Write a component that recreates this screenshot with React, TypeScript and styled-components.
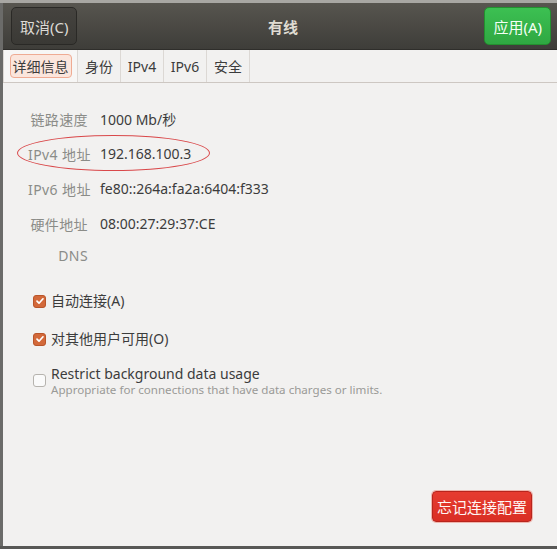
import styled, { createGlobalStyle } from 'styled-components';

const GlobalStyle = createGlobalStyle`
  html, body {
    margin: 0;
    padding: 0;
    background: #6e6e6c;
  }
  body {
    font-family: "Noto Sans", "Noto Sans CJK SC", sans-serif;
  }
`;

const fields = [
  { label: '链路速度', value: '1000 Mb/秒' },
  { label: 'IPv4 地址', value: '192.168.100.3', marked: true },
  { label: 'IPv6 地址', value: 'fe80::264a:fa2a:6404:f333' },
  { label: '硬件地址', value: '08:00:27:29:37:CE' },
  { label: 'DNS', value: '', short: true },
];

const tabs = ['详细信息', '身份', 'IPv4', 'IPv6', '安全'];

const CheckIcon = () => (
  <svg width="10" height="10" viewBox="0 0 10 10" fill="none">
    <path d="M2 5.2l2 2 4-4.4" stroke="#fff" strokeWidth="1.7" strokeLinecap="round" strokeLinejoin="round" />
  </svg>
);

export default function App() {
  return (
    <>
      <GlobalStyle />
      <Screen>
        <TopStrip />
        <Body>
          <SideStrip />
          <Window>
            <HeaderBar>
              <HeaderButton>取消(C)</HeaderButton>
              <Title>有线</Title>
              <HeaderButton $primary>应用(A)</HeaderButton>
            </HeaderBar>
            <TabBar>
              {tabs.map((t, i) => (
                <Tab key={t} $active={i === 0}>
                  <TabLabel $focused={i === 0}>{t}</TabLabel>
                </Tab>
              ))}
            </TabBar>
            <Content>
              <Fields>
                {fields.map((f) => (
                  <FieldRow key={f.label} $short={f.short}>
                    <Label>{f.label}</Label>
                    <Value>{f.value}</Value>
                    {f.marked && <Ellipse />}
                  </FieldRow>
                ))}
              </Fields>
              <Checks>
                <CheckRow>
                  <Box $checked><CheckIcon /></Box>
                  <CheckText>自动连接(A)</CheckText>
                </CheckRow>
                <CheckRow>
                  <Box $checked><CheckIcon /></Box>
                  <CheckText>对其他用户可用(O)</CheckText>
                </CheckRow>
                <CheckRow $top>
                  <Box />
                  <div>
                    <CheckText>Restrict background data usage</CheckText>
                    <Hint>Appropriate for connections that have data charges or limits.</Hint>
                  </div>
                </CheckRow>
              </Checks>
              <Footer>
                <DangerButton>忘记连接配置</DangerButton>
              </Footer>
            </Content>
          </Window>
        </Body>
        <BottomStrip />
      </Screen>
    </>
  );
}

const Screen = styled.div`
  width: 557px;
  height: 549px;
  display: flex;
  flex-direction: column;
  overflow: hidden;
`;

const TopStrip = styled.div`
  height: 3px;
  background: #a8a7a3;
`;

const Body = styled.div`
  flex: 1;
  display: flex;
`;

const SideStrip = styled.div`
  width: 3px;
  background: #6b6b69;
`;

const BottomStrip = styled.div`
  height: 3px;
  background: #585856;
`;

const Window = styled.div`
  flex: 1;
  display: flex;
  flex-direction: column;
  background: #f2f1f0;
`;

const HeaderBar = styled.header`
  height: 47px;
  box-sizing: border-box;
  display: flex;
  align-items: center;
  justify-content: space-between;
  padding: 0 6px 0 8px;
  background: linear-gradient(#57554f, #3e3d39);
  border-bottom: 1px solid #2f2e2b;
`;

const HeaderButton = styled.div<{ $primary?: boolean }>`
  height: 38px;
  box-sizing: border-box;
  display: flex;
  align-items: center;
  padding: 0 8px;
  border-radius: 5px;
  font-size: 15px;
  color: ${({ $primary }) => ($primary ? '#f4fff4' : '#dcdad5')};
  background: ${({ $primary }) =>
    $primary ? 'linear-gradient(#3cc052, #2fa842)' : 'linear-gradient(#45433f, #3a3935)'};
  border: 1px solid ${({ $primary }) => ($primary ? '#23902f' : '#2a2926')};
`;

const Title = styled.div`
  font-size: 15px;
  font-weight: bold;
  color: #dfdbd2;
  margin-left: 4px;
`;

const TabBar = styled.nav`
  height: 33px;
  box-sizing: border-box;
  display: flex;
  align-items: stretch;
  border-bottom: 1px solid #cdc7c2;
  background: #f2f1f0;
`;

const Tab = styled.div<{ $active?: boolean }>`
  display: flex;
  align-items: center;
  justify-content: center;
  flex-shrink: 0;
  box-sizing: border-box;
  width: ${({ $active }) => ($active ? '75px' : '43px')};
  padding: 0;
  background: ${({ $active }) => ($active ? '#f7f6f5' : 'transparent')};
  border-right: 1px solid #dcd8d4;
  border-left: ${({ $active }) => ($active ? '1px solid #dcd8d4' : 'none')};
`;

const TabLabel = styled.span<{ $focused?: boolean }>`
  font-size: 14px;
  color: #3c3c3c;
  white-space: nowrap;
  padding: 1px 2px;
  border-radius: 4px;
  border: 1px solid ${({ $focused }) => ($focused ? '#efab93' : 'transparent')};
  background: ${({ $focused }) => ($focused ? '#fbe6dd' : 'transparent')};
`;

const Content = styled.main`
  flex: 1;
  display: flex;
  flex-direction: column;
  padding: 18px 0 24px 25px;
`;

const Fields = styled.div`
  display: flex;
  flex-direction: column;
`;

const FieldRow = styled.div<{ $short?: boolean }>`
  position: relative;
  height: ${({ $short }) => ($short ? '29px' : '35px')};
  display: flex;
  align-items: center;
  gap: 12px;
  margin-bottom: ${({ $short }) => ($short ? '6px' : '0')};
`;

const Label = styled.span`
  width: 60px;
  white-space: nowrap;
  text-align: right;
  font-size: 14px;
  letter-spacing: 0.4px;
  color: #8b8c88;
`;

const Value = styled.span`
  font-size: 14px;
  white-space: nowrap;
  color: #3c3c3c;
`;

const Ellipse = styled.div`
  position: absolute;
  left: -11px;
  top: -1px;
  width: 193px;
  height: 36px;
  border: 1px solid #d9484a;
  border-radius: 50%;
  box-sizing: border-box;
  pointer-events: none;
`;

const Checks = styled.div`
  display: flex;
  flex-direction: column;
  gap: 20px;
  margin-top: 16px;
  padding-left: 5px;
`;

const CheckRow = styled.div<{ $top?: boolean }>`
  display: flex;
  align-items: ${({ $top }) => ($top ? 'flex-start' : 'center')};
  gap: 5px;
  margin-top: ${({ $top }) => ($top ? '-3px' : '0')};
`;

const Box = styled.span<{ $checked?: boolean }>`
  width: 13px;
  height: 13px;
  flex-shrink: 0;
  box-sizing: border-box;
  border-radius: 3px;
  display: flex;
  align-items: center;
  justify-content: center;
  margin-top: ${({ $checked }) => ($checked ? '0' : '9px')};
  background: ${({ $checked }) => ($checked ? '#d3693a' : '#fafafa')};
  border: 1px solid ${({ $checked }) => ($checked ? '#b9552a' : '#b6b3ae')};
`;

const CheckText = styled.div`
  font-size: 14px;
  color: #3c3c3c;
  line-height: 18px;
  white-space: nowrap;
`;

const Hint = styled.div`
  font-size: 11.6px;
  color: #9a9a97;
  line-height: 13px;
  white-space: nowrap;
`;

const Footer = styled.div`
  margin-top: auto;
  display: flex;
  justify-content: flex-end;
  padding-right: 25px;
`;

const DangerButton = styled.div`
  height: 31px;
  box-sizing: border-box;
  display: flex;
  align-items: center;
  padding: 0 4px;
  border-radius: 4px;
  font-size: 15px;
  color: #fff6f4;
  background: linear-gradient(#e63c30, #d92e24);
  border: 1px solid #b8251d;
  box-shadow: 0 0 0 1px #f0b5ad;
`;
